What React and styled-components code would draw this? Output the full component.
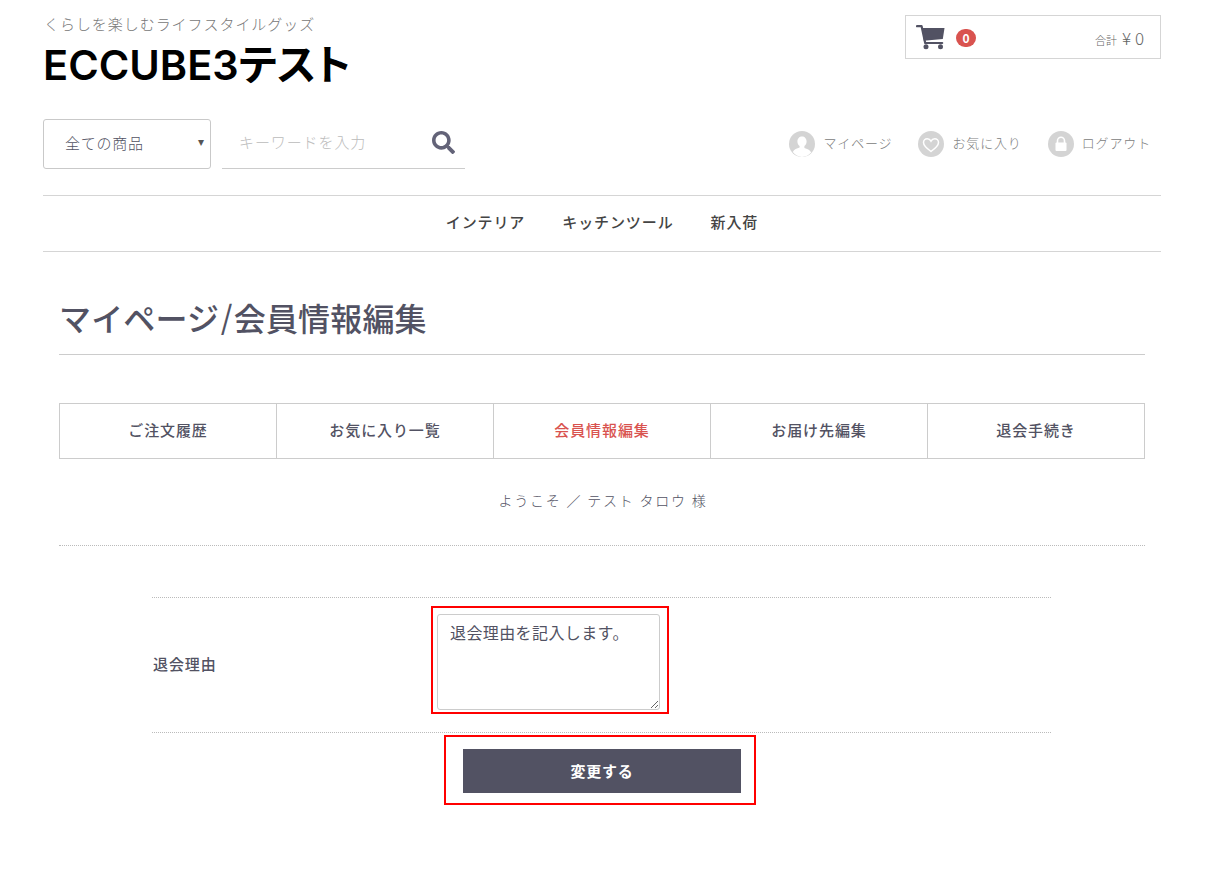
import React from "react";
import styled, { createGlobalStyle } from "styled-components";
import { FaSearch } from "react-icons/fa";

const Global = createGlobalStyle`
  html, body { margin: 0; padding: 0; background: #fff; }
  body { font-family: "Noto Sans CJK JP", "Noto Sans", sans-serif; color: #525263; }
  * { box-sizing: border-box; }
`;

const Page = styled.div`
  width: 1118px;
  height: 875px;
  margin-left: 43px;
  overflow: hidden;
`;
const TopRow = styled.header`
  display: flex;
  justify-content: space-between;
  align-items: flex-start;
  height: 119px;
`;
const Brand = styled.div`
  padding-top: 14px;
`;
const Tagline = styled.p`
  margin: 0;
  font-size: 15px;
  line-height: 20px;
  letter-spacing: 0.95px;
  color: #777;
  font-weight: 300;
  padding-left: 1px;
`;
const SiteTitle = styled.h1`
  margin: 6px 0 0;
  font-family: Inter, "Noto Sans CJK JP", sans-serif;
  font-size: 41.500px;
  line-height: 50px;
  font-weight: 600;
  font-feature-settings: "palt";
  color: #000;
`;
const Cart = styled.div`
  width: 256px;
  height: 44px;
  margin-top: 15px;
  border: 1px solid #d5d5d5;
  display: flex;
  align-items: center;
  padding: 0 16px 0 10px;
  color: #525263;
`;
const Badge = styled.span`
  width: 20px;
  height: 18px;
  margin: 2px 0 0 11px;
  border-radius: 9px;
  background: #d9534f;
  color: #fff;
  font-size: 12px;
  font-weight: 700;
  line-height: 17px;
  text-align: center;
`;
const Total = styled.span`
  margin-left: auto;
  font-size: 11px;
  font-weight: 300;
  color: #666;
  display: flex;
  align-items: baseline;
  gap: 5px;
`;
const TotalValue = styled.span`
  font-size: 17px;
`;
const ToolRow = styled.div`
  display: flex;
  align-items: flex-start;
  height: 76px;
`;
const CategorySelect = styled.div`
  position: relative;
  width: 168px;
  height: 50px;
  border: 1px solid #c9c9c9;
  border-radius: 3px;
  padding-left: 21px;
  font-size: 15px;
  font-weight: 300;
  line-height: 45px;
  letter-spacing: 0.75px;
  color: #525263;
  &::after {
    content: "▾";
    position: absolute;
    right: 5px;
    top: 0;
    font-size: 12px;
    color: #555;
    font-family: "DejaVu Sans", sans-serif;
  }
`;
const Search = styled.div`
  width: 243px;
  height: 50px;
  margin-left: 11px;
  border-bottom: 1px solid #ccc;
  display: flex;
  align-items: center;
  justify-content: space-between;
  padding: 0 10px 4px 17px;
  font-size: 15px;
  font-weight: 300;
  letter-spacing: 0.9px;
  color: #bbb;
`;
const SearchIcon = styled(FaSearch)`
  margin-top: 2px;
`;
const UserNav = styled.nav`
  margin-left: auto;
  display: flex;
  gap: 26px;
  padding: 12px 10px 0 0;
`;
const UserLink = styled.a`
  display: flex;
  align-items: center;
  gap: 8px;
  font-size: 13px;
  font-weight: 300;
  letter-spacing: 0.85px;
  color: #808080;
`;
const UserLabel = styled.span`
  margin-top: -3px;
`;
const MainNav = styled.nav`
  height: 57px;
  border-top: 1px solid #d5d5d5;
  border-bottom: 1px solid #d5d5d5;
  display: flex;
  justify-content: center;
  align-items: center;
  gap: 37px;
  padding-bottom: 5px;
  font-size: 15px;
  font-weight: 500;
  letter-spacing: 0.9px;
  color: #444;
`;
const Main = styled.main`
  padding: 0 16px;
`;
const PageTitle = styled.h2`
  margin: 46px 0 0;
  height: 57px;
  border-bottom: 1px solid #ccc;
  font-size: 32px;
  line-height: 39px;
  letter-spacing: 0.15px;
  font-weight: 500;
  color: #525263;
`;
const Slash = styled.span`
  font-family: Inter, sans-serif;
  font-weight: 300;
  font-size: 36px;
  margin: 0 1px;
`;
const Tabs = styled.ul`
  display: grid;
  grid-template-columns: repeat(4, 217px) 218px;
  margin: 48px 0 0;
  padding: 0;
  list-style: none;
  height: 56px;
  border-top: 1px solid #ccc;
  border-bottom: 1px solid #ccc;
`;
const Tab = styled.li`
  display: flex;
  align-items: center;
  justify-content: center;
  padding-bottom: 3px;
  border-left: 1px solid #ccc;
  font-size: 15px;
  font-weight: 500;
  letter-spacing: 0.9px;
  color: ${(p) => (p.$active ? "#d9534f" : "#525263")};
  &:last-child { border-right: 1px solid #ccc; }
`;
const Welcome = styled.p`
  margin: 0;
  height: 87px;
  border-bottom: 1px dotted #bbb;
  padding: 29px 0 0 2px;
  text-align: center;
  font-size: 14px;
  line-height: 24px;
  font-weight: 300;
  letter-spacing: 1.8px;
  color: #525263;
`;
const Form = styled.form`
  width: 899px;
  margin: 51px 0 0 93px;
`;
const FormRow = styled.div`
  display: flex;
  height: 136px;
  border-top: 1px dotted #bbb;
  border-bottom: 1px dotted #bbb;
  padding-top: 8px;
`;
const Label = styled.label`
  width: 279px;
  padding: 48px 0 0 1px;
  font-size: 15px;
  letter-spacing: 0.9px;
  line-height: 20px;
  font-weight: 500;
  color: #525263;
`;
const TextFrame = styled.div`
  width: 238px;
  height: 108px;
  border: 2px solid #f00;
  padding: 6px 7px 2px 4px;
`;
const ReasonText = styled.textarea`
  display: block;
  width: 223px;
  height: 96px;
  margin: 0;
  border: 1px solid #ccc;
  border-radius: 3px;
  padding: 5px 12px;
  font: 400 16px/24px "Noto Sans CJK JP", sans-serif;
  letter-spacing: 0.4px;
  color: #525263;
  background: #fff;
  outline: none;
`;
const ButtonRow = styled.div`
  display: flex;
  justify-content: center;
  padding: 2px 4px 0 0;
  margin-left: -93px;
  width: 1086px;
`;
const ButtonFrame = styled.div`
  width: 312px;
  height: 70px;
  border: 2px solid #f00;
  padding: 12px 13px 10px 17px;
`;
const Submit = styled.button`
  display: block;
  width: 278px;
  height: 44px;
  border: 0;
  padding: 0 0 2px;
  background: #525263;
  color: #fff;
  font: 700 15px "Noto Sans CJK JP", sans-serif;
  letter-spacing: 0.7px;
`;

const CartIcon = () => (
  <svg width="29" height="25" viewBox="0 0 29 25" aria-hidden="true">
    <path d="M1 1.200h4.600l3.600 16.800h17" fill="none" stroke="#525263" strokeWidth="2.200" strokeLinecap="round" strokeLinejoin="round" />
    <path d="M6.200 3h22.300l-1.700 11-19 1.800z" fill="#525263" />
    <circle cx="10" cy="21.800" r="2.500" fill="#525263" />
    <circle cx="24.500" cy="21.800" r="2.500" fill="#525263" />
  </svg>
);

const Disc = ({ children }) => (
  <svg width="26" height="26" viewBox="0 0 26 26" aria-hidden="true">
    <circle cx="13" cy="13" r="13" fill="#d4d4d4" />
    {children}
  </svg>
);

const PersonIcon = () => (
  <Disc>
    <path d="M13 5.500c-2.700 0-4.600 2.100-4.600 5 0 2 1 3.600 2.200 4.500v1.400c-2.600.7-5.600 1.900-6.800 4.600A13 13 0 0 0 13 26a13 13 0 0 0 9.200-4.500c-1.200-2.700-4.200-3.900-6.800-4.600V15c1.200-.9 2.200-2.500 2.200-4.500 0-2.900-1.900-5-4.600-5z" fill="#fff" />
  </Disc>
);
const HeartIcon = () => (
  <Disc>
    <path d="M13 20.500c-5-3.500-7.500-6.100-7.500-8.900 0-2.200 1.700-3.800 3.700-3.800 1.600 0 3 .9 3.800 2.400.8-1.500 2.200-2.400 3.800-2.400 2 0 3.700 1.600 3.700 3.800 0 2.800-2.500 5.400-7.500 8.900z" fill="none" stroke="#fff" strokeWidth="1.500" />
  </Disc>
);
const LockIcon = () => (
  <Disc>
    <path d="M9.500 12V9.800a3.500 3.500 0 0 1 7 0V12" fill="none" stroke="#fff" strokeWidth="1.600" />
    <rect x="7.500" y="11.500" width="11" height="8.500" rx="1" fill="#fff" />
  </Disc>
);

export default function App() {
  return (
    <Page>
      <Global />
      <TopRow>
        <Brand>
          <Tagline>くらしを楽しむライフスタイルグッズ</Tagline>
          <SiteTitle>ECCUBE3テスト</SiteTitle>
        </Brand>
        <Cart>
          <CartIcon />
          <Badge>0</Badge>
          <Total>
            合計<TotalValue>¥ 0</TotalValue>
          </Total>
        </Cart>
      </TopRow>
      <ToolRow>
        <CategorySelect>全ての商品</CategorySelect>
        <Search>
          キーワードを入力
          <SearchIcon size={23} color="#636378" />
        </Search>
        <UserNav>
          <UserLink><PersonIcon /><UserLabel>マイページ</UserLabel></UserLink>
          <UserLink><HeartIcon /><UserLabel>お気に入り</UserLabel></UserLink>
          <UserLink><LockIcon /><UserLabel>ログアウト</UserLabel></UserLink>
        </UserNav>
      </ToolRow>
      <MainNav>
        <span>インテリア</span>
        <span>キッチンツール</span>
        <span>新入荷</span>
      </MainNav>
      <Main>
        <PageTitle>マイページ<Slash>/</Slash>会員情報編集</PageTitle>
        <Tabs>
          <Tab>ご注文履歴</Tab>
          <Tab>お気に入り一覧</Tab>
          <Tab $active>会員情報編集</Tab>
          <Tab>お届け先編集</Tab>
          <Tab>退会手続き</Tab>
        </Tabs>
        <Welcome>ようこそ ／ テスト タロウ 様</Welcome>
        <Form>
          <FormRow>
            <Label htmlFor="reason">退会理由</Label>
            <TextFrame>
              <ReasonText id="reason" defaultValue="退会理由を記入します。" />
            </TextFrame>
          </FormRow>
          <ButtonRow>
            <ButtonFrame>
              <Submit type="button">変更する</Submit>
            </ButtonFrame>
          </ButtonRow>
        </Form>
      </Main>
    </Page>
  );
}
